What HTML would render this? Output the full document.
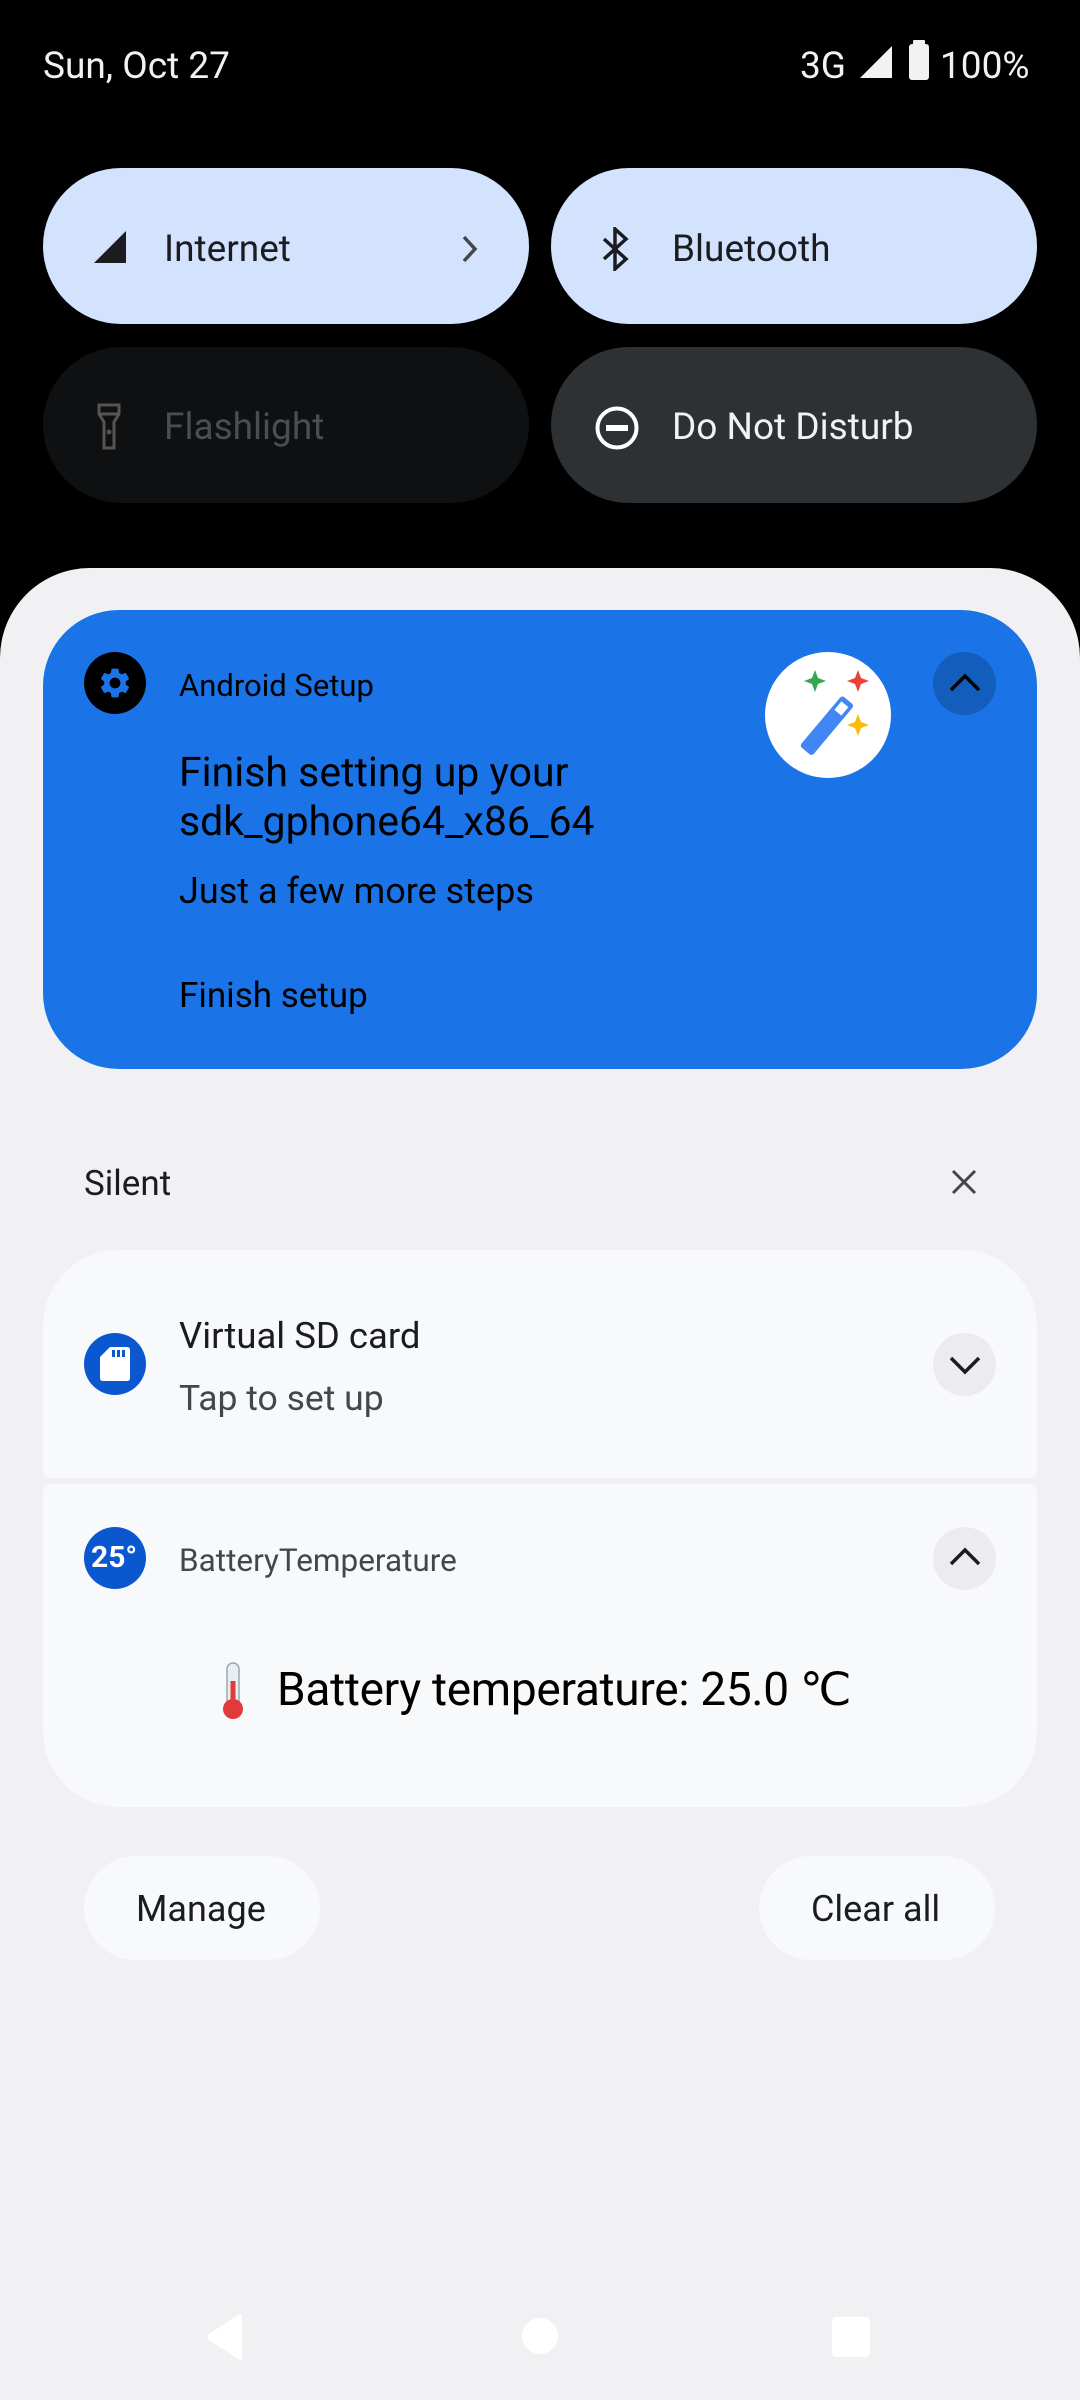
<!DOCTYPE html>
<html><head><meta charset="utf-8">
<style>
*{margin:0;padding:0;box-sizing:border-box}
body{width:1080px;height:2400px;background:#000;position:relative;overflow:hidden;font-family:"Roboto","Liberation Sans",sans-serif}
.a{position:absolute}
.t{position:absolute;white-space:nowrap;line-height:1}
.tile{position:absolute;width:486px;height:156px;border-radius:78px}
</style></head><body>
<div class="t" style="left:43px;top:48px;font-size:37px;color:#f2f2f2">Sun, Oct 27</div>
<div class="t" style="left:800px;top:48px;font-size:37px;color:#f2f2f2">3G</div>
<svg class="a" style="left:858px;top:44px" width="36" height="36"><path d="M34 2V34H2Z" fill="#f2f2f2"/></svg>
<svg class="a" style="left:908px;top:40px" width="22" height="40"><rect x="5" y="0" width="12" height="5" rx="1" fill="#f2f2f2"/><rect x="1" y="4" width="20" height="36" rx="3" fill="#f2f2f2"/></svg>
<div class="t" style="left:940px;top:48px;font-size:37px;color:#f2f2f2">100%</div>

<div class="tile" style="left:43px;top:168px;background:#d3e3fd"></div>
<svg class="a" style="left:93px;top:230px" width="34" height="34"><path d="M33 1V33H1Z" fill="#1b1c1f"/></svg>
<div class="t" style="left:164px;top:231px;font-size:37px;color:#1b1c1f">Internet</div>
<svg class="a" style="left:460px;top:234px" width="20" height="30"><path d="M4 3L15 15L4 27" stroke="#44474a" stroke-width="3.5" fill="none"/></svg>

<div class="tile" style="left:551px;top:168px;background:#d3e3fd"></div>
<svg class="a" style="left:598px;top:227px" width="36" height="44"><path d="M6 12L28 32L17 42V2L28 12L6 32" stroke="#1b1c1f" stroke-width="3.5" fill="none" stroke-linejoin="miter"/></svg>
<div class="t" style="left:672px;top:231px;font-size:37px;color:#1b1c1f">Bluetooth</div>

<div class="tile" style="left:43px;top:347px;background:#0e1011"></div>
<svg class="a" style="left:96px;top:402px" width="26" height="50"><path d="M3 3H23V12L18 20V46H8V20L3 12Z M3 12H23" stroke="#555" stroke-width="3" fill="none"/><circle cx="13" cy="30" r="2.5" fill="#555"/></svg>
<div class="t" style="left:164px;top:409px;font-size:37px;color:#4b4d4f">Flashlight</div>

<div class="tile" style="left:551px;top:347px;background:#2e3133"></div>
<svg class="a" style="left:594px;top:405px" width="46" height="46"><circle cx="23" cy="23" r="19.5" stroke="#fff" stroke-width="4" fill="none"/><rect x="12" y="20" width="22" height="6" fill="#fff"/></svg>
<div class="t" style="left:672px;top:409px;font-size:37px;color:#f2f2f2">Do Not Disturb</div>

<div class="a" style="left:0;top:568px;width:1080px;height:1832px;background:#f1f1f4;border-radius:90px 90px 0 0"></div>

<div class="a" style="left:43px;top:610px;width:994px;height:459px;background:#1b73e8;border-radius:76px"></div>
<div class="a" style="left:84px;top:652px;width:62px;height:62px;border-radius:50%;background:#000"></div>
<svg class="a" style="left:97px;top:665px" width="36" height="36" viewBox="0 0 24 24"><path fill="#1b73e8" d="M19.14 12.94c.04-.3.06-.61.06-.94 0-.32-.02-.64-.07-.94l2.030-1.58a.49.49 0 0 0 .12-.61l-1.92-3.32a.488.488 0 0 0-.59-.22l-2.39.96c-.5-.38-1.03-.7-1.62-.94l-.36-2.54a.484.484 0 0 0-.48-.41h-3.840c-.24 0-.43.17-.47.41l-.36 2.54c-.59.24-1.13.57-1.62.94l-2.39-.96c-.22-.08-.47 0-.59.22L2.74 8.87c-.12.21-.08.47.12.61l2.03 1.58c-.05.3-.09.63-.09.94s.02.64.07.94l-2.03 1.58a.49.49 0 0 0-.12.61l1.92 3.32c.12.22.37.29.59.22l2.39-.96c.5.38 1.03.7 1.62.94l.36 2.54c.05.24.24.41.48.41h3.84c.24 0 .44-.17.47-.41l.36-2.54c.59-.24 1.13-.56 1.62-.94l2.39.96c.22.08.47 0 .59-.22l1.92-3.32c.12-.22.07-.47-.12-.61l-2.01-1.58zM12 15.6c-1.98 0-3.6-1.62-3.6-3.6s1.62-3.6 3.6-3.6 3.6 1.62 3.6 3.6-1.62 3.6-3.6 3.6z"/></svg>
<div class="t" style="left:179px;top:670px;font-size:31px;color:#000">Android Setup</div>
<div class="a" style="left:765px;top:652px;width:126px;height:126px;border-radius:50%;background:#fff"></div>
<svg class="a" style="left:765px;top:652px" width="126" height="126">
<path d="M50 18L53 26L61 29L53 32L50 40L47 32L39 29L47 26Z" fill="#34a853"/>
<path d="M93 18L96 26L104 29L96 32L93 40L90 32L82 29L90 26Z" fill="#ea4335"/>
<path d="M93 62L96 70L104 73L96 76L93 84L90 76L82 73L90 70Z" fill="#fbbc04"/>
<g transform="rotate(40 60 76)"><rect x="52" y="40" width="16" height="66" rx="3" fill="#4285f4"/><rect x="55.5" y="45" width="9" height="11" fill="#fff"/></g>
</svg>
<div class="a" style="left:933px;top:652px;width:63px;height:63px;border-radius:50%;background:#135dbd"></div>
<svg class="a" style="left:948px;top:668px" width="34" height="30"><path d="M3 22L17 8L31 22" stroke="#000" stroke-width="3.5" fill="none"/></svg>
<div class="t" style="left:179px;top:749px;font-size:41px;color:#000;line-height:49px">Finish setting up your<br>sdk_gphone64_x86_64</div>
<div class="t" style="left:179px;top:873px;font-size:36px;color:#000">Just a few more steps</div>
<div class="t" style="left:179px;top:978px;font-size:35px;color:#000">Finish setup</div>

<div class="t" style="left:84px;top:1166px;font-size:35px;color:#1b1c1f">Silent</div>
<svg class="a" style="left:950px;top:1168px" width="28" height="28"><path d="M3 3L25 25M25 3L3 25" stroke="#44474a" stroke-width="3"/></svg>

<div class="a" style="left:43px;top:1250px;width:994px;height:228px;background:#f8f9fb;border-radius:76px 76px 8px 8px"></div>
<div class="a" style="left:84px;top:1333px;width:62px;height:62px;border-radius:50%;background:#0b57d0"></div>
<svg class="a" style="left:100px;top:1347px" width="30" height="34"><path d="M10 0H27Q30 0 30 3V31Q30 34 27 34H3Q0 34 0 31V10Z" fill="#fff"/><rect x="12" y="3" width="3" height="7" fill="#0b57d0"/><rect x="17" y="3" width="3" height="7" fill="#0b57d0"/><rect x="22" y="3" width="3" height="7" fill="#0b57d0"/></svg>
<div class="t" style="left:179px;top:1318px;font-size:36.5px;color:#1b1c1f">Virtual SD card</div>
<div class="t" style="left:179px;top:1381px;font-size:35.5px;color:#44474a">Tap to set up</div>
<div class="a" style="left:933px;top:1333px;width:63px;height:63px;border-radius:50%;background:#ececef"></div>
<svg class="a" style="left:948px;top:1350px" width="34" height="30"><path d="M3 8L17 22L31 8" stroke="#1b1c1f" stroke-width="3.5" fill="none"/></svg>

<div class="a" style="left:43px;top:1484px;width:994px;height:323px;background:#f8f9fb;border-radius:8px 8px 76px 76px"></div>
<div class="a" style="left:84px;top:1527px;width:62px;height:62px;border-radius:50%;background:#0b57d0"></div>
<div class="t" style="left:91px;top:1543px;font-size:30px;font-weight:bold;color:#fff">25°</div>
<div class="t" style="left:179px;top:1545px;font-size:31.5px;color:#44474a">BatteryTemperature</div>
<div class="a" style="left:933px;top:1527px;width:63px;height:63px;border-radius:50%;background:#ececef"></div>
<svg class="a" style="left:948px;top:1542px" width="34" height="30"><path d="M3 22L17 8L31 22" stroke="#1b1c1f" stroke-width="3.5" fill="none"/></svg>
<svg class="a" style="left:218px;top:1661px" width="30" height="60"><rect x="9" y="2" width="12" height="44" rx="6" fill="#e8eef5" stroke="#9aa" stroke-width="1.5"/><rect x="12.5" y="20" width="5" height="28" fill="#e03a3a"/><circle cx="15" cy="48" r="10" fill="#e03a3a"/></svg>
<div class="t" style="left:277px;top:1667px;font-size:46px;color:#000;letter-spacing:-0.3px">Battery temperature: 25.0 ℃</div>

<div class="a" style="left:84px;top:1856px;width:236px;height:104px;border-radius:52px;background:#f8f9fb"></div>
<div class="t" style="left:136px;top:1891px;font-size:36px;color:#1b1c1f">Manage</div>
<div class="a" style="left:759px;top:1856px;width:236px;height:104px;border-radius:52px;background:#f8f9fb"></div>
<div class="t" style="left:811px;top:1891px;font-size:36px;color:#1b1c1f">Clear all</div>

<svg class="a" style="left:200px;top:2310px" width="700" height="60">
<path d="M42 6V48Q42 52 38 49L9 30Q6 27 9 24L38 5Q42 3 42 6Z" fill="#fff"/>
<circle cx="340" cy="26" r="18" fill="#fff"/>
<rect x="632" y="7" width="38" height="40" rx="4" fill="#fff"/>
</svg>
</body></html>
